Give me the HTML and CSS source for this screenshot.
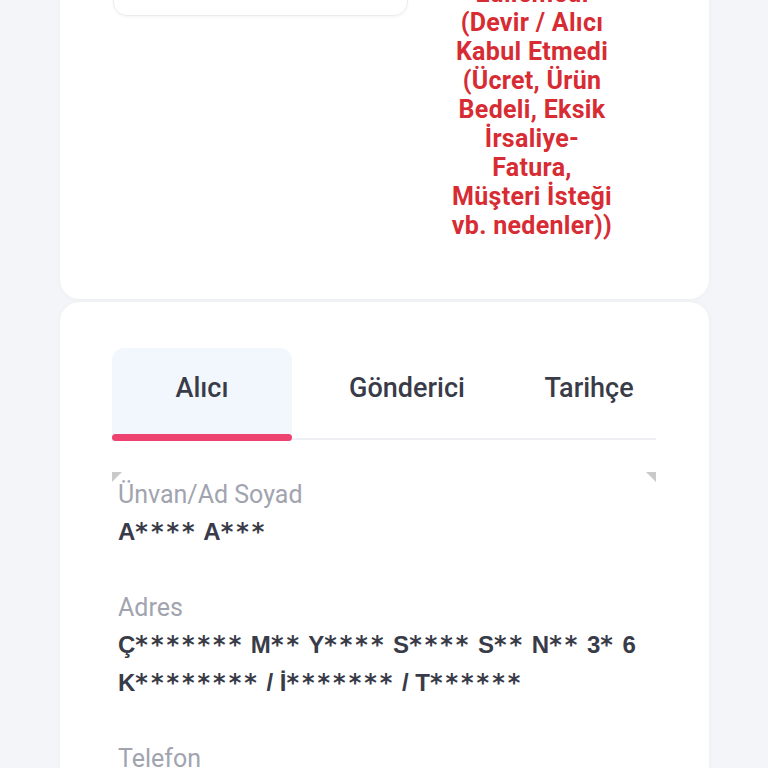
FILE: index.html
```html
<!DOCTYPE html>
<html lang="tr">
<head>
    <meta charset="UTF-8">
    <meta name="viewport" content="width=device-width, initial-scale=1.0">
    <title>Gönderi Detayı</title>
    <link rel="stylesheet" href="styles.css">
</head>
<body>
    <div class="page">
        <div class="card status-card">
            <div class="status-box"></div>
            <div class="status-text">
                Teslim Edilemedi (Devir / Alıcı Kabul Etmedi (Ücret, Ürün Bedeli, Eksik İrsaliye-Fatura, Müşteri İsteği vb. nedenler))
            </div>
        </div>

        <div class="card detail-card">
            <div class="tabs">
                <div class="tab tab-active tab-alici">Alıcı</div>
                <div class="tab tab-gonderici">Gönderici</div>
                <div class="tab tab-tarihce">Tarihçe</div>
            </div>

            <div class="fields">
                <div class="field">
                    <div class="field-label">Ünvan/Ad Soyad</div>
                    <div class="field-value">A<span class="mask">****</span> A<span class="mask">***</span></div>
                </div>
                <div class="field">
                    <div class="field-label">Adres</div>
                    <div class="field-value">Ç<span class="mask">*******</span> M<span class="mask">**</span> Y<span class="mask">****</span> S<span class="mask">****</span> S<span class="mask">**</span> N<span class="mask">**</span> 3<span class="mask">*</span> 6<br>K<span class="mask">********</span> / İ<span class="mask">*******</span> / T<span class="mask">******</span></div>
                </div>
                <div class="field">
                    <div class="field-label">Telefon</div>
                    <div class="field-value">0<span class="mask">***</span> <span class="mask">***</span> <span class="mask">**</span> <span class="mask">**</span></div>
                </div>
            </div>
        </div>
    </div>
</body>
</html>
```

FILE: styles.css
```css
body {
    margin: 0;
    background-color: #f3f5f9;
    font-family: Roboto, 'Liberation Sans', sans-serif;
    color: #393c48;
}
.page {
    margin-top: -120px;
    padding: 0 59px 0 60px;
}
.card {
    background-color: #fff;
    border-radius: 20px;
    box-shadow: 0 0 6px rgba(0,0,0,0.03);
}
.status-card {
    display: flex;
    align-items: flex-start;
    padding: 10px 53px 59px 53px;
    border-radius: 0 0 20px 20px;
}
.status-box {
    width: 295px;
    height: 126px;
    box-sizing: border-box;
    border: 1px solid #ececec;
    border-radius: 14px;
    box-shadow: 0 1px 3px rgba(0,0,0,0.05);
}
.status-text {
    flex: 1;
    margin-top: 60px;
    padding: 0 41px;
    text-align: center;
    color: #d72c33;
    font-size: 25px;
    font-weight: 700;
    letter-spacing: 0.3px;
    line-height: 29px;
}
.detail-card {
    margin-top: 3px;
    padding: 46px 53px 40px 52px;
}
.tabs {
    display: flex;
    border-bottom: 2px solid #eff0f3;
}
.tab {
    height: 90px;
    display: flex;
    align-items: center;
    justify-content: center;
    font-size: 27px;
    font-weight: 500;
    color: #393c48;
    box-sizing: border-box;
    padding-bottom: 10px;
}
.tab-alici {
    width: 180px;
}
.tab-gonderici {
    width: 230px;
}
.tab-tarihce {
    width: 134px;
}
.tab-active {
    background-color: #f1f7fd;
    border-radius: 12px 12px 0 0;
    position: relative;
}
.tab-active::after {
    content: "";
    position: absolute;
    left: 0;
    right: 0;
    bottom: -3px;
    height: 7px;
    border-radius: 4px;
    background-color: #ee4270;
}
.fields {
    position: relative;
    margin-top: 32px;
    padding: 8px 6px 0 6px;
}
.fields::before,
.fields::after {
    content: "";
    position: absolute;
    top: 0;
    width: 0;
    height: 0;
    border-top: 10px solid #c9c9cc;
}
.fields::before {
    left: 0;
    border-right: 10px solid transparent;
}
.fields::after {
    right: 0;
    border-left: 10px solid transparent;
}
.field {
    margin-bottom: 42px;
}
.field-label {
    font-size: 25px;
    line-height: 30px;
    color: #a1a4af;
}
.field-value {
    font-family: 'Liberation Sans', Arial, sans-serif;
    font-size: 24px;
    font-weight: 700;
    line-height: 37px;
    color: #393c48;
    margin-top: 3px;
}
.mask {
    font-family: 'DejaVu Sans', sans-serif;
    letter-spacing: 3px;
}
```
